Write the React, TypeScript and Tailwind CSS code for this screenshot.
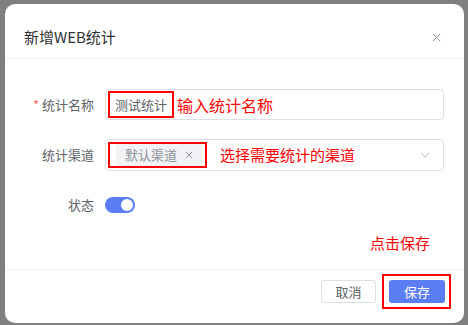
const font = { fontFamily: '"Noto Sans CJK SC", "Noto Sans", sans-serif' };

function CloseIcon({ size = 9, color = "#909399" }: { size?: number; color?: string }) {
  return (
    <svg width={size} height={size} viewBox="0 0 10 10" fill="none">
      <path d="M1 1L9 9M9 1L1 9" stroke={color} strokeWidth="1.1" />
    </svg>
  );
}

function Chevron() {
  return (
    <svg width="10" height="6" viewBox="0 0 10 6" fill="none">
      <path d="M1 1L5 5L9 1" stroke="#b4b8c0" strokeWidth="1" />
    </svg>
  );
}

export default function App() {
  return (
    <div className="w-[468px] h-[325px] bg-[#7f7f7f] pt-[4px] pl-[5px] overflow-hidden" style={font}>
      <div className="w-[459px] h-[319px] bg-white rounded-[10px] flex flex-col">
        {/* header */}
        <div className="h-[55px] border-b border-[#eeeff2] flex items-start justify-between pt-[19px] pl-[19px] pr-[23px]">
          <span className="text-[15px] leading-[28px] text-[#303133]">新增WEB统计</span>
          <span className="mt-[10px]">
            <CloseIcon />
          </span>
        </div>

        {/* body */}
        <div className="h-[210px] flex flex-col pt-[30px]">
          <div className="flex items-center h-[31px]">
            <div className="w-[89px] text-right text-[13px] text-[#606266]">
              <span className="text-[#f56c6c] mr-[3px]">*</span>统计名称
            </div>
            <div className="ml-[11px] w-[339px] h-[31px] border border-[#dcdfe6] rounded-[4px] flex items-center pl-[2px]">
              <span className="border-2 border-[#ff0000] h-[27px] px-[5px] flex items-center text-[13px] text-[#606266]">
                测试统计
              </span>
              <span className="ml-[3px] text-[16px] text-[#ff0000]">输入统计名称</span>
            </div>
          </div>

          <div className="flex items-center h-[32px] mt-[19px]">
            <div className="w-[89px] text-right text-[13px] text-[#606266]">统计渠道</div>
            <div className="ml-[11px] w-[339px] h-[32px] border border-[#dcdfe6] rounded-[4px] flex items-center pl-[2px] pr-[13px]">
              <span className="border-2 border-[#ff0000] h-[26px] pl-[6px] pr-[3px] flex items-center">
                <span className="h-[22px] bg-[#f0f2f5] rounded-[3px] px-[9px] flex items-center gap-[8px] text-[13px] text-[#909399]">
                  默认渠道
                  <CloseIcon size={8} />
                </span>
              </span>
              <span className="ml-[13px] text-[15px] text-[#ff0000]">选择需要统计的渠道</span>
              <span className="ml-auto flex">
                <Chevron />
              </span>
            </div>
          </div>

          <div className="flex items-center h-[32px] mt-[18px]">
            <div className="w-[89px] text-right text-[13px] text-[#606266]">状态</div>
            <div className="ml-[11px] w-[30px] h-[16px] rounded-full bg-[#5b7ef6] flex items-center justify-end pr-[2px]">
              <span className="w-[12px] h-[12px] rounded-full bg-white" />
            </div>
          </div>

          <div className="flex justify-end pr-[34px] mt-[12px]">
            <span className="text-[15px] leading-[20px] text-[#ff0000]">点击保存</span>
          </div>
        </div>

        {/* footer */}
        <div className="border-t border-[#eeeff2] flex items-center justify-end pt-[4px] pr-[13px]">
          <button className="w-[55px] h-[23px] border border-[#dcdfe6] rounded-[3px] text-[13px] text-[#606266] bg-white flex items-center justify-center">
            取消
          </button>
          <div className="ml-[6px] border-2 border-[#ff0000] pl-[5px] pr-[4px] py-[4px]">
            <button className="w-[56px] h-[23px] rounded-[3px] bg-[#5b7ef6] text-white text-[13px] flex items-center justify-center">
              保存
            </button>
          </div>
        </div>
      </div>
    </div>
  );
}
